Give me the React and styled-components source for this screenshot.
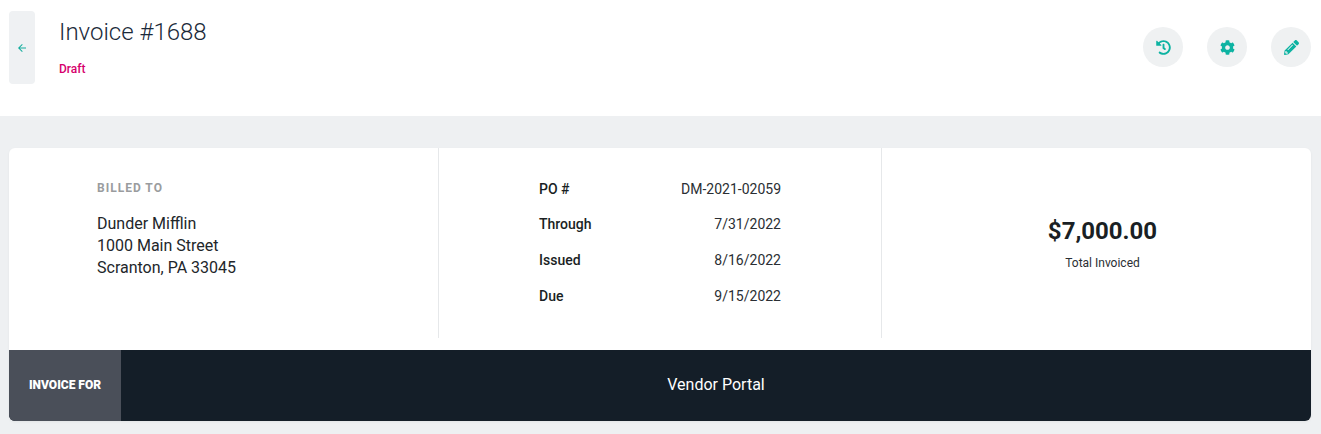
import React from 'react';
import styled, { createGlobalStyle } from 'styled-components';
import { FaHistory, FaCog, FaPencilAlt } from 'react-icons/fa';
import { MdArrowBack } from 'react-icons/md';

const GlobalStyle = createGlobalStyle`
  html, body {
    margin: 0;
    height: 100%;
    background: #eef0f2;
    font-family: Roboto, "Liberation Sans", sans-serif;
    color: #1a1f24;
    overflow: hidden;
  }
`;

const Header = styled.header`
  display: flex;
  height: 116px;
  box-sizing: border-box;
  padding: 11px 10px 0 9px;
  background: #fff;
`;

const BackButton = styled.button`
  display: flex;
  align-items: center;
  justify-content: center;
  width: 26px;
  height: 73px;
  padding: 0 1px 0 0;
  border: 0;
  border-radius: 4px;
  background: #eff1f3;
  color: #14ad9e;
  font-size: 12px;
`;

const TitleBlock = styled.div`
  flex: 1;
  margin-left: 24px;
`;

const Title = styled.h1`
  margin: 4px 0 0;
  font-size: 24px;
  line-height: 34px;
  font-weight: 300;
  color: #1b2a3a;
`;

const Status = styled.div`
  margin-top: 12px;
  font-size: 12px;
  line-height: 16px;
  font-weight: 500;
  color: #d6006d;
`;

const Actions = styled.div`
  display: flex;
  gap: 24px;
  padding-top: 16px;
`;

const RoundButton = styled.button`
  display: flex;
  align-items: center;
  justify-content: center;
  width: 40px;
  height: 40px;
  padding: 0;
  border: 0;
  border-radius: 50%;
  background: #eff1f2;
  color: #0db3a2;
  font-size: 15px;
`;

const Main = styled.main`
  padding: 32px 10px 0 9px;
`;

const Card = styled.section`
  border-radius: 6px;
  overflow: hidden;
  background: #fff;
  box-shadow: 0 1px 3px rgba(0, 0, 0, 0.05);
`;

const Columns = styled.div`
  display: grid;
  grid-template-columns: 430px 443px 1fr;
  height: 190px;
  margin-bottom: 12px;
`;

const Column = styled.div`
  box-sizing: border-box;
  border-right: ${p => (p.$divider ? '1px solid #e6e8ea' : '0')};
`;

const BilledColumn = styled(Column)`
  padding: 34px 0 0 88px;
`;

const BilledLabel = styled.div`
  font-size: 12px;
  line-height: 13px;
  font-weight: 700;
  letter-spacing: 1px;
  color: #9a9c9e;
`;

const Address = styled.address`
  margin-top: 18px;
  font-style: normal;
  font-size: 16px;
  line-height: 22px;
  color: #22262a;
`;

const MetaColumn = styled(Column)`
  padding: 23px 100px 0 100px;
`;

const MetaRow = styled.div`
  display: flex;
  justify-content: space-between;
  align-items: center;
  height: 36px;
  font-size: 14px;

  &:first-child {
    height: 35px;
  }
`;

const MetaLabel = styled.span`
  font-weight: 500;
  color: #1a1f24;
`;

const MetaValue = styled.span`
  font-weight: 400;
  color: #2a2e33;
`;

const TotalColumn = styled(Column)`
  display: flex;
  flex-direction: column;
  align-items: center;
  padding: 67px 0 0 12px;
`;

const TotalAmount = styled.div`
  font-size: 24px;
  line-height: 32px;
  font-weight: 700;
  color: #1a1f24;
`;

const TotalCaption = styled.div`
  margin-top: 8px;
  font-size: 12px;
  line-height: 16px;
  color: #2a2e33;
`;

const ForBar = styled.div`
  display: flex;
  height: 71px;
  background: #141e28;
  color: #fff;
`;

const ForLabel = styled.div`
  display: flex;
  align-items: center;
  justify-content: center;
  width: 112px;
  padding-bottom: 2px;
  box-sizing: border-box;
  background: #4a4f59;
  font-size: 12px;
  font-weight: 900;
`;

const ForName = styled.div`
  flex: 1;
  display: flex;
  align-items: center;
  justify-content: center;
  padding-bottom: 2px;
  font-size: 16px;
`;

const meta = [
  ['PO #', 'DM-2021-02059'],
  ['Through', '7/31/2022'],
  ['Issued', '8/16/2022'],
  ['Due', '9/15/2022'],
];

export default function App() {
  return (
    <>
      <GlobalStyle />
      <Header>
        <BackButton aria-label="Back"><MdArrowBack /></BackButton>
        <TitleBlock>
          <Title>Invoice #1688</Title>
          <Status>Draft</Status>
        </TitleBlock>
        <Actions>
          <RoundButton aria-label="History"><FaHistory /></RoundButton>
          <RoundButton aria-label="Settings"><FaCog /></RoundButton>
          <RoundButton aria-label="Edit"><FaPencilAlt /></RoundButton>
        </Actions>
      </Header>
      <Main>
        <Card>
          <Columns>
            <BilledColumn $divider>
              <BilledLabel>BILLED TO</BilledLabel>
              <Address>
                Dunder Mifflin<br />
                1000 Main Street<br />
                Scranton, PA 33045
              </Address>
            </BilledColumn>
            <MetaColumn $divider>
              {meta.map(([label, value]) => (
                <MetaRow key={label}>
                  <MetaLabel>{label}</MetaLabel>
                  <MetaValue>{value}</MetaValue>
                </MetaRow>
              ))}
            </MetaColumn>
            <TotalColumn>
              <TotalAmount>$7,000.00</TotalAmount>
              <TotalCaption>Total Invoiced</TotalCaption>
            </TotalColumn>
          </Columns>
          <ForBar>
            <ForLabel>INVOICE FOR</ForLabel>
            <ForName>Vendor Portal</ForName>
          </ForBar>
        </Card>
      </Main>
    </>
  );
}
